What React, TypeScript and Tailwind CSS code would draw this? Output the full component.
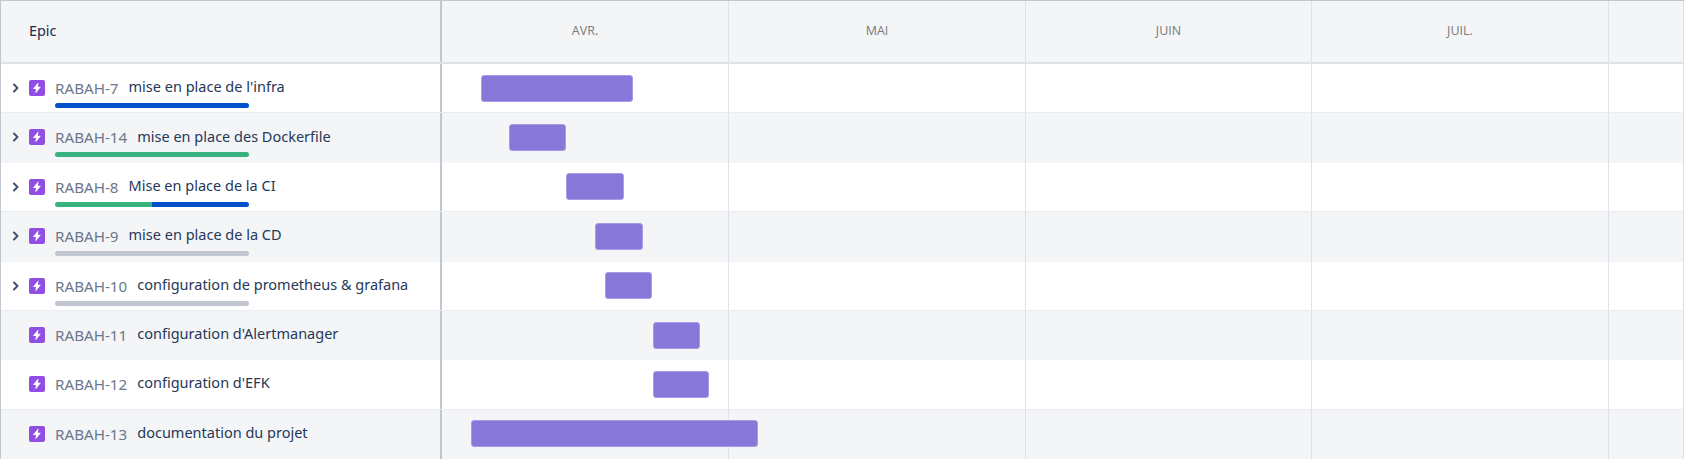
const months = [
  { label: "AVR.", width: "w-[287px]" },
  { label: "MAI", width: "w-[297px]" },
  { label: "JUIN", width: "w-[286px]" },
  { label: "JUIL.", width: "w-[297px]" },
  { label: "", width: "flex-1" },
]

type Epic = {
  id: string
  title: string
  start: number
  end: number
  expandable: boolean
  progress?: string[]
}

const epics: Epic[] = [
  { id: "RABAH-7", title: "mise en place de l'infra", start: 481, end: 633, expandable: true, progress: ["bg-[#0052cc] flex-1"] },
  { id: "RABAH-14", title: "mise en place des Dockerfile", start: 509, end: 566, expandable: true, progress: ["bg-[#36b37e] flex-1"] },
  { id: "RABAH-8", title: "Mise en place de la CI", start: 566, end: 624, expandable: true, progress: ["bg-[#36b37e] flex-1", "bg-[#0052cc] flex-1"] },
  { id: "RABAH-9", title: "mise en place de la CD", start: 595, end: 643, expandable: true, progress: ["bg-[#c1c7d0] flex-1"] },
  { id: "RABAH-10", title: "configuration de prometheus & grafana", start: 605, end: 652, expandable: true, progress: ["bg-[#c1c7d0] flex-1"] },
  { id: "RABAH-11", title: "configuration d'Alertmanager", start: 653, end: 700, expandable: false },
  { id: "RABAH-12", title: "configuration d'EFK", start: 653, end: 709, expandable: false },
  { id: "RABAH-13", title: "documentation du projet", start: 471, end: 758, expandable: false },
]

const TIMELINE_LEFT = 442

function Chevron() {
  return (
    <svg width="8" height="10" viewBox="0 0 8 10" fill="none" className="text-[#42526e]">
      <path d="M2 1.5 5.5 5 2 8.5" stroke="currentColor" strokeWidth="2" strokeLinecap="round" strokeLinejoin="round" />
    </svg>
  )
}

function EpicIcon() {
  return (
    <div className="flex h-4 w-4 items-center justify-center rounded-[2px] bg-[#904ee2]">
      <svg width="16" height="16" viewBox="0 0 16 16">
        <path d="M9 2.8 4.2 8.6c-.2.2 0 .5.2.5h2.6l-.6 3.6c0 .3.3.4.5.2l4.7-5.7c.2-.2 0-.5-.2-.5H8.8l.7-3.6c0-.3-.3-.4-.5-.3z" fill="#fff" />
      </svg>
    </div>
  )
}

function EpicRow({ epic, striped }: { epic: Epic; striped: boolean }) {
  return (
    <div className={`flex h-[49.4px] ${striped ? "bg-[#f4f5f7]" : "border-b border-[#ebecf0] bg-white"}`}>
      <div className="flex w-[439px] shrink-0 pl-[10px] pt-[16px]">
        <div className="flex h-4 w-[18px] shrink-0 items-center pl-[1px]">{epic.expandable && <Chevron />}</div>
        <EpicIcon />
        <div className="ml-[10px] -mt-[7px] flex w-[194px] shrink-0 flex-col">
          <div className="flex h-[29px] items-center whitespace-nowrap">
            <span className="mt-[2px] text-[15.2px] text-[#6b778c]">{epic.id}</span>
            <span className="ml-[10px] -mt-[1px] text-[14.5px] text-[#253858]">{epic.title}</span>
          </div>
          {epic.progress && (
            <div className="mt-[1px] flex h-[5px] overflow-hidden rounded-full">
              {epic.progress.map((c) => (
                <div key={c} className={c} />
              ))}
            </div>
          )}
        </div>
      </div>
      <div className="relative flex flex-1 border-l-2 border-[#c1c7d0]">
        {months.map((m) => (
          <div key={m.label} className={`${m.width} shrink-0 border-r border-[#dfe1e6]`} />
        ))}
        <div
          className="absolute top-[10.6px] h-[27px] rounded-[3px] border border-[#a79cea] bg-[#8777d9]"
          style={{ left: epic.start - TIMELINE_LEFT, width: epic.end - epic.start }}
        />
      </div>
    </div>
  )
}

export default function App() {
  return (
    <div className="h-[459px] w-[1684px] overflow-hidden border-l border-t border-[#c1c7d0] bg-white font-['Noto_Sans',sans-serif]">
      <div className="flex h-[63px] border-b-2 border-[#dfe1e6] bg-[#f4f5f7]">
        <div className="flex w-[439px] shrink-0 items-start pl-[28px] pt-[19px] text-[14.4px] text-[#172b4d]">Epic</div>
        <div className="flex flex-1 border-l-2 border-[#c1c7d0]">
          {months.map((m) => (
            <div
              key={m.label}
              className={`${m.width} flex shrink-0 items-center justify-center border-r border-[#dfe1e6] font-['Open_Sans',sans-serif] text-[12.5px] text-[#7a7a7a]`}
            >
              {m.label}
            </div>
          ))}
        </div>
      </div>
      {epics.map((epic, i) => (
        <EpicRow key={epic.id} epic={epic} striped={i % 2 === 1} />
      ))}
    </div>
  )
}
